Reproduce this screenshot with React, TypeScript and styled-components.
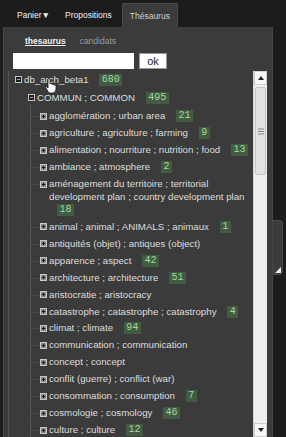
import React from "react";
import styled, { createGlobalStyle, css } from "styled-components";

const Global = createGlobalStyle`
  html, body { margin: 0; padding: 0; background: #1c1c1c; }
  body { font-family: "Liberation Sans", Arial, sans-serif; overflow: hidden; }
  * { box-sizing: border-box; }
`;

const Page = styled.div`
  position: relative;
  width: 286px;
  height: 437px;
  overflow: hidden;
  background: #1c1c1c;
  display: flex;
  flex-direction: column;
`;

const TabBar = styled.div`
  display: flex;
  align-items: flex-end;
  height: 27px;
  padding-left: 10px;
  flex-shrink: 0;
`;

const Tab = styled.div<{ $active?: boolean }>`
  height: 24px;
  padding: 0 7px;
  margin-right: 1px;
  display: flex;
  align-items: center;
  font-size: 8.5px;
  color: #f2f2f2;
  white-space: nowrap;
  ${(p) =>
    p.$active &&
    css`
      margin-left: 2px;
      background: #3b3b3b;
      color: #cfcfcf;
      border: 1px solid #4a4a4a;
      border-bottom: none;
      border-radius: 2px 2px 0 0;
    `}
`;

const Panel = styled.div`
  margin-left: 3px;
  width: 270px;
  flex: 1;
  min-height: 0;
  background: #3b3b3b;
  border-left: 1px solid #474747;
  border-right: 1px solid #444;
  display: flex;
  flex-direction: column;
`;

const SubTabs = styled.div`
  display: flex;
  align-items: center;
  gap: 14px;
  height: 15px;
  margin-top: 6px;
  padding-left: 21px;
  font-size: 8.5px;
`;

const SubTab = styled.span<{ $active?: boolean }>`
  color: ${(p) => (p.$active ? "#f0f0f0" : "#9c9c9c")};
  font-weight: ${(p) => (p.$active ? "bold" : "normal")};
  text-decoration: ${(p) => (p.$active ? "underline" : "none")};
`;

const SearchRow = styled.div`
  display: flex;
  gap: 5px;
  height: 16px;
  margin-top: 5px;
  padding-left: 9px;
`;

const SearchInput = styled.input`
  width: 121px;
  height: 16px;
  border: none;
  background: #ffffff;
  padding: 0 3px;
  outline: none;
`;

const OkButton = styled.button`
  width: 28px;
  height: 16px;
  padding: 0;
  border: 1px solid #9a9a9a;
  background: #ffffff;
  color: #222;
  font-family: "Liberation Sans", Arial, sans-serif;
  font-size: 11px;
  line-height: 14px;
`;

const TreeBox = styled.div`
  margin: 2px 0 0 4px;
  width: 259px;
  flex: 1;
  min-height: 0;
  display: flex;
  border-left: 1px solid #555555;
`;

const TreeScroll = styled.div`
  flex: 1;
  overflow: hidden;
`;

const Row = styled.div<{ $indent: number; $pad: number; $branch?: boolean }>`
  position: relative;
  display: flex;
  align-items: flex-start;
  padding: ${(p) => p.$pad}px 2px ${(p) => p.$pad}px ${(p) => p.$indent}px;
  line-height: 12.8px;
  font-size: 9.7px;
  color: #dedede;
  ${(p) =>
    p.$branch &&
    css`
      &::before {
        content: "";
        position: absolute;
        left: 22px;
        top: ${p.$pad + 6}px;
        width: 8px;
        height: 1px;
        background: #4c4c4c;
      }
    `}
`;

const Label = styled.span`
  flex: 1;
`;

const Count = styled.span`
  display: inline-block;
  margin-left: 8px;
  padding: 0 2.5px;
  line-height: 12px;
  vertical-align: top;
  background: #425c42;
  color: #a2d89e;
  font-family: "Liberation Mono", monospace;
  font-size: 10px;
`;

const Children = styled.div`
  position: relative;
  margin-top: 1px;
  &::before {
    content: "";
    position: absolute;
    left: 21px;
    top: -4px;
    bottom: 0;
    width: 1px;
    background: #585858;
  }
`;

const ToggleSvg = styled.svg`
  flex-shrink: 0;
  width: 7px;
  height: 7px;
  margin-top: 2.9px;
  margin-right: 2px;
`;

const Toggle = ({ open }: { open?: boolean }) =>
  open ? (
    <ToggleSvg viewBox="0 0 7 7">
      <rect x="0.5" y="0.5" width="6" height="6" fill="#1e1e1e" stroke="#c4c4c4" />
      <line x1="2" y1="3.5" x2="5" y2="3.5" stroke="#aaaaaa" />
    </ToggleSvg>
  ) : (
    <ToggleSvg viewBox="0 0 7 7">
      <rect x="0.5" y="0.5" width="6" height="6" fill="#8c8c8c" stroke="#c8c8c8" />
      <line x1="1.8" y1="3.5" x2="5.2" y2="3.5" stroke="#1a1a1a" />
      <line x1="3.5" y1="1.8" x2="3.5" y2="5.2" stroke="#1a1a1a" />
    </ToggleSvg>
  );

const ScrollBar = styled.div`
  width: 14px;
  flex-shrink: 0;
  display: flex;
  flex-direction: column;
  background: #efefef;
  border-left: 1px solid #d2d2d2;
`;

const ScrollButton = styled.div`
  height: 14px;
  flex-shrink: 0;
  display: flex;
  align-items: center;
  justify-content: center;
  background: #f7f7f7;
  border: 1px solid #cfcfcf;
`;

const ScrollThumb = styled.div`
  height: 88px;
  margin: 2px 1px 0 1px;
  flex-shrink: 0;
  display: flex;
  align-items: center;
  justify-content: center;
  background: #e2e2e2;
  border: 1px solid #c4c4c4;
  border-radius: 2px;
`;

const ScrollTrack = styled.div`
  flex: 1;
`;

const SideHandle = styled.div`
  position: absolute;
  left: 273px;
  top: 220px;
  width: 10px;
  height: 55px;
  background: #3c3c3c;
  border: 1px solid #4a4a4a;
  border-left: none;
  border-radius: 0 4px 4px 0;
  display: flex;
  align-items: flex-end;
  justify-content: flex-end;
  padding: 0 1px 1px 0;
`;

const CursorSvg = styled.svg`
  position: absolute;
  left: 45px;
  top: 78px;
  width: 12px;
  height: 16px;
`;

type Item = { name: string; count?: number };

const items: Item[] = [
  { name: "agglomération ; urban area", count: 21 },
  { name: "agriculture ; agriculture ; farming", count: 9 },
  { name: "alimentation ; nourriture ; nutrition ; food", count: 13 },
  { name: "ambiance ; atmosphere", count: 2 },
  {
    name: "aménagement du territoire ; territorial development plan ; country development plan",
    count: 18,
  },
  { name: "animal ; animal ; ANIMALS ; animaux", count: 1 },
  { name: "antiquités (objet) ; antiques (object)" },
  { name: "apparence ; aspect", count: 42 },
  { name: "architecture ; architecture", count: 51 },
  { name: "aristocratie ; aristocracy" },
  { name: "catastrophe ; catastrophe ; catastrophy", count: 4 },
  { name: "climat ; climate", count: 94 },
  { name: "communication ; communication" },
  { name: "concept ; concept" },
  { name: "conflit (guerre) ; conflict (war)" },
  { name: "consommation ; consumption", count: 7 },
  { name: "cosmologie ; cosmology", count: 46 },
  { name: "culture ; culture", count: 12 },
];

export default function App() {
  return (
    <Page>
      <Global />
      <TabBar>
        <Tab>Panier▼</Tab>
        <Tab>Propositions</Tab>
        <Tab $active>Thésaurus</Tab>
      </TabBar>
      <Panel>
        <SubTabs>
          <SubTab $active>thesaurus</SubTab>
          <SubTab>candidats</SubTab>
        </SubTabs>
        <SearchRow>
          <SearchInput />
          <OkButton>ok</OkButton>
        </SearchRow>
        <TreeBox>
          <TreeScroll>
            <Row $indent={6} $pad={2.6}>
              <Toggle open />
              <Label>
                db_arch_beta1 <Count>680</Count>
              </Label>
            </Row>
            <Row $indent={19} $pad={2.6}>
              <Toggle open />
              <Label>
                COMMUN ; COMMON <Count>495</Count>
              </Label>
            </Row>
            <Children>
              {items.map((it) => (
                <Row key={it.name} $indent={31} $pad={2.1} $branch>
                  <Toggle />
                  <Label>
                    {it.name}
                    {it.count !== undefined && (
                      <>
                        {" "}
                        <Count>{it.count}</Count>
                      </>
                    )}
                  </Label>
                </Row>
              ))}
            </Children>
          </TreeScroll>
          <ScrollBar>
            <ScrollButton>
              <svg width="6" height="4" viewBox="0 0 6 4">
                <polygon points="0,4 6,4 3,0" fill="#222" />
              </svg>
            </ScrollButton>
            <ScrollThumb>
              <svg width="6" height="7" viewBox="0 0 6 7">
                <line x1="0" y1="1" x2="6" y2="1" stroke="#8a8a8a" />
                <line x1="0" y1="3.5" x2="6" y2="3.5" stroke="#8a8a8a" />
                <line x1="0" y1="6" x2="6" y2="6" stroke="#8a8a8a" />
              </svg>
            </ScrollThumb>
            <ScrollTrack />
            <ScrollButton>
              <svg width="6" height="4" viewBox="0 0 6 4">
                <polygon points="0,0 6,0 3,4" fill="#222" />
              </svg>
            </ScrollButton>
          </ScrollBar>
        </TreeBox>
      </Panel>
      <SideHandle>
        <svg width="6" height="6" viewBox="0 0 6 6">
          <polygon points="6,0 6,6 0,6" fill="#e8e8e8" />
        </svg>
      </SideHandle>
      <CursorSvg viewBox="0 0 12 16">
        <path
          d="M3 1.5 Q3 0.5 4 0.5 Q5 0.5 5 1.5 V6 Q5 5.3 6 5.3 Q7 5.3 7 6 V6.6 Q7 6 8 6 Q9 6 9 6.8 V7.3 Q9 6.8 10 6.8 Q11 6.8 11 7.8 V11 Q11 14.5 8 15 H5.5 Q4 15 3 13.5 L0.8 10 Q0.3 9 1.2 8.7 Q1.9 8.5 2.5 9.3 L3 10 Z"
          fill="#ffffff"
          stroke="#111111"
          strokeWidth="0.8"
        />
      </CursorSvg>
    </Page>
  );
}
